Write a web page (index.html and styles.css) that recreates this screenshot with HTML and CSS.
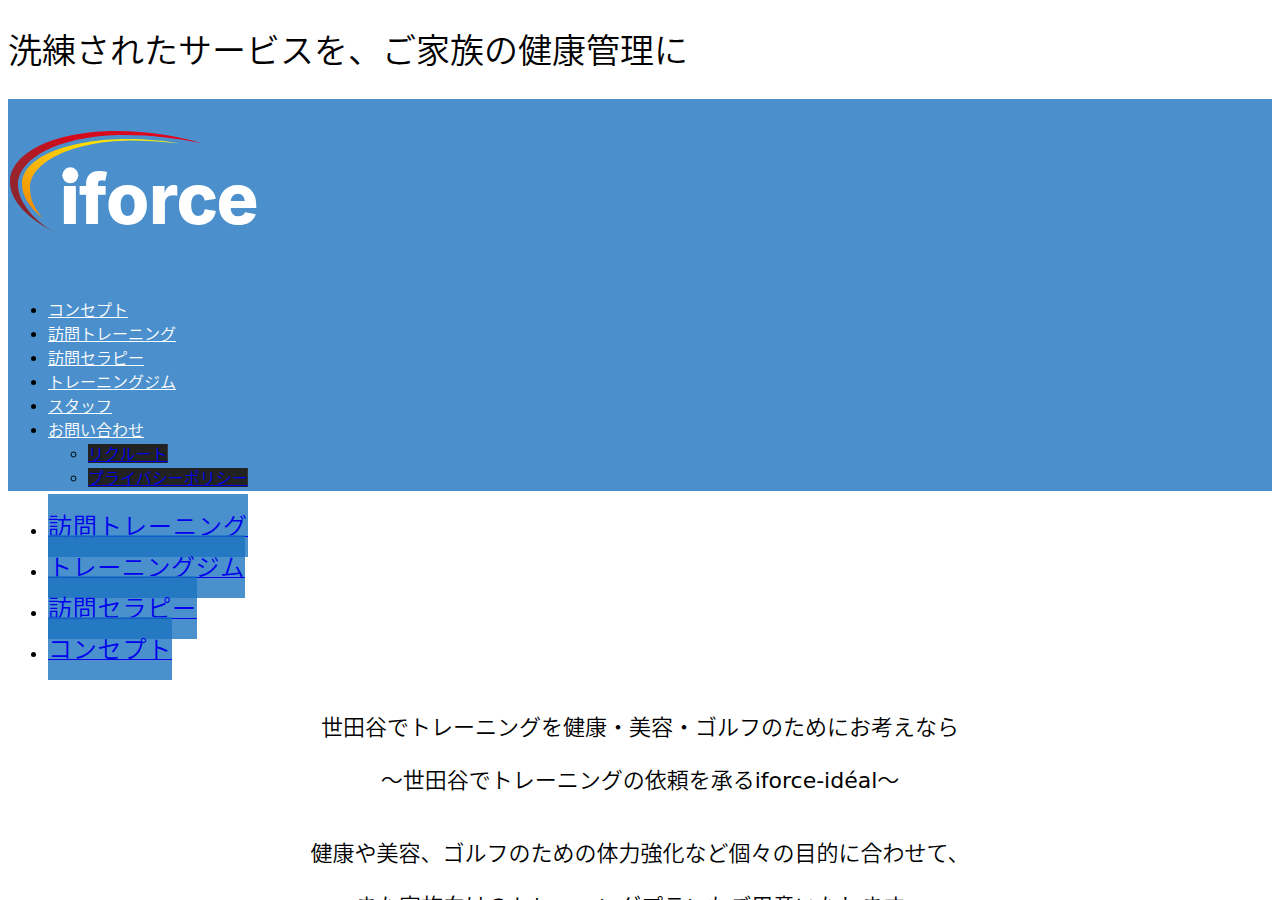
FILE: index.html
```html
<!DOCTYPE html>
<html lang="ja">
<head>
<meta charset="utf-8">
<title>iforce</title>
<link rel="stylesheet" href="styles.css">
</head>
<body>
<h1 class="tagline">洗練されたサービスを、ご家族の健康管理に</h1>
<header class="header">
  <svg class="logo" viewBox="0 0 250 110" role="img" aria-label="iforce">
    <defs>
      <linearGradient id="red" x1="0" y1="1" x2="1" y2="0"><stop offset="0" stop-color="#7e2630"/><stop offset=".35" stop-color="#9f222a"/><stop offset=".6" stop-color="#d20b1b"/><stop offset="1" stop-color="#e30820"/></linearGradient>
      <linearGradient id="gold" x1="0" y1="1" x2="1" y2="0"><stop offset="0" stop-color="#ef8300"/><stop offset=".4" stop-color="#fab80b"/><stop offset=".7" stop-color="#ffdf00"/><stop offset="1" stop-color="#e5ef20"/></linearGradient>
    </defs>
    <path fill="url(#red)" d="M48 102C20 88 2 70 2 51C2 21 48 0 108 0C140 0 171 5 194 12.500C168 7 143 4 117 4C54 4 10 26 10 54C10 71 27 91 48 102Z"/>
    <path fill="url(#gold)" d="M35 87.500C21 76 14 65 14 53C14 27 58 8 121 8C138 8 156 9.500 171 12.500C154 10.500 138 9.500 121 9.500C64 10.500 22 31 22 57C22 69 27 78 35 87.500Z"/>
    <text class="logo-text" x="52 71 98 141 168.500 208.500" y="92.500">iforce</text>
    <circle cx="62.300" cy="44.300" r="8" fill="#fff"/>
  </svg>
  <ul class="nav">
    <li><a href="#">コンセプト</a></li>
    <li><a href="#">訪問トレーニング</a></li>
    <li><a href="#">訪問セラピー</a></li>
    <li><a href="#">トレーニングジム</a></li>
    <li><a href="#">スタッフ</a></li>
    <li><a href="#">お問い合わせ</a>
      <ul class="subnav">
        <li><a href="#">リクルート</a></li>
        <li><a href="#">プライバシーポリシー</a></li>
      </ul>
    </li>
  </ul>
</header>
<ul class="features">
  <li><a href="#">訪問トレーニング</a></li>
  <li><a class="tight" href="#">トレーニングジム</a></li>
  <li><a class="medium" href="#">訪問セラピー</a></li>
  <li><a class="medium" href="#">コンセプト</a></li>
</ul>
<main class="intro">
  <p>世田谷でトレーニングを健康・美容・ゴルフのためにお考えなら</p>
  <p>～世田谷でトレーニングの依頼を承るiforce-idéal～</p>
  <p class="lead">健康や美容、ゴルフのための体力強化など個々の目的に合わせて、</p>
  <p>また家族向けのトレーニングプランもご用意いたします。</p>
</main>
</body>
</html>
```
FILE: styles.css
```css
html {
  height: 100%;
  overflow: hidden;
}

body {
  margin: 8px;
  background: #fff;
  color: #000;
  font-family: "DejaVu Sans", "Noto Sans CJK JP DemiLight", "Noto Sans CJK JP", sans-serif;
  font-size: 16px;
  font-weight: 400;
  line-height: 24px;
}

.tagline {
  margin: 0;
  padding: 17px 0 22px;
  font-size: 34px;
  font-weight: 400;
  line-height: 52px;
}

.header {
  height: 392px;
  background: #4b90cc;
}

.logo {
  display: block;
  width: 250px;
  height: 110px;
  padding: 32px 0 58px;
}

.logo-text {
  fill: #fff;
  font-family: Inter, sans-serif;
  font-size: 70px;
  font-weight: 800;
}

.nav,
.subnav,
.features {
  margin: 0;
  padding-left: 40px;
}

.nav a {
  color: #fff;
}

.subnav a {
  padding-top: 1px;
  background: linear-gradient(#222, #222) top / 100% 19px no-repeat;
  color: #00e;
  text-decoration-thickness: 1px;
}

.features {
  padding-top: 20px;
}

.features li {
  height: 41px;
  line-height: 41px;
}

.features a {
  padding: 19px 0 16px;
  background: rgba(28, 115, 191, .795);
  color: #00e;
  font-size: 24px;
  font-weight: 300;
  line-height: 1;
  letter-spacing: 1px;
  text-decoration-thickness: 1px;
  vertical-align: 2px;
}

.features .tight {
  letter-spacing: .6px;
}

.features .medium {
  letter-spacing: .8px;
}

.intro {
  padding-top: 36px;
  font-size: 22px;
  line-height: 33px;
  text-align: center;
}

.intro p {
  margin: 0 0 20px;
}

.intro .lead {
  margin-top: 40px;
}
```
